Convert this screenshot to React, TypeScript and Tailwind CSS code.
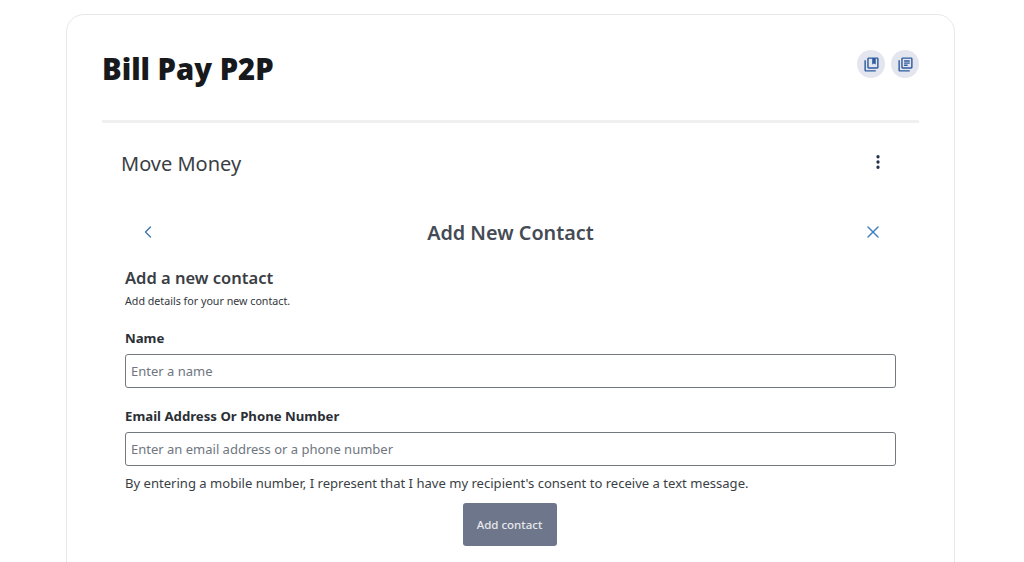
import React from 'react'
import { ChevronLeft, X, EllipsisVertical } from 'lucide-react'

const font = { sans: "font-['Noto_Sans',sans-serif]" }

// Stacked-page icons in the top right corner
const BookmarkStack = () => (
  <svg width="17" height="17" viewBox="0 0 24 24" fill="#2f5c9e">
    <path d="M4 6H2v14c0 1.1.9 2 2 2h14v-2H4V6z" />
    <path fillRule="evenodd" d="M20 2H8c-1.1 0-2 .9-2 2v12c0 1.100.9 2 2 2h12c1.100 0 2-.9 2-2V4c0-1.100-.9-2-2-2zm0 14H8V4h5v8l2.500-1.500L18 12V4h2v12z" />
  </svg>
)

const ArticleStack = () => (
  <svg width="17" height="17" viewBox="0 0 24 24" fill="#2f5c9e">
    <path d="M4 6H2v14c0 1.1.9 2 2 2h14v-2H4V6z" />
    <path fillRule="evenodd" d="M20 2H8c-1.100 0-2 .9-2 2v12c0 1.100.9 2 2 2h12c1.100 0 2-.9 2-2V4c0-1.100-.9-2-2-2zm0 14H8V4h12v12zM10 9h8v2h-8V9zm0 3h5v2h-5v-2zm0-6h8v2h-8V6z" />
  </svg>
)

const Field: React.FC<{ label: string; placeholder: string; className?: string }> = ({ label, placeholder, className = '' }) => (
  <div className={className}>
    <label className="block text-[13.2px] leading-[18px] font-bold text-[#2b2f36]">{label}</label>
    <input
      placeholder={placeholder}
      className="mt-[7px] block h-[34px] w-full rounded-[3px] border border-[#74787f] bg-white px-[5px] text-[13px] text-[#333] placeholder:text-[#6f7680] outline-none"
    />
  </div>
)

export default function App() {
  return (
    <div className={`h-[562px] overflow-hidden bg-white pt-[14px] ${font.sans}`}>
      <div className="ml-[66px] h-[600px] w-[889px] rounded-[18px] border border-[#e8e8ea] bg-white px-[35px]">
        <header className="flex h-[108px] items-start justify-between border-b-[3px] border-[#f0f0f1]">
          <h1 className="mt-[32px] text-[29.2px] leading-[44px] font-black text-[#17191c]">Bill Pay P2P</h1>
          <div className="mt-[35px] flex gap-[6px]">
            <button className="flex h-[28px] w-[28px] items-center justify-center rounded-full bg-[#e3e6ee]">
              <BookmarkStack />
            </button>
            <button className="flex h-[28px] w-[28px] items-center justify-center rounded-full bg-[#e3e6ee]">
              <ArticleStack />
            </button>
          </div>
        </header>

        <div className="flex items-start justify-between pt-[26px] pl-[19px] pr-[32px]">
          <h2 className="text-[20px] leading-[30px] text-[#3a3e44]">Move Money</h2>
          <EllipsisVertical size={18} strokeWidth={2.4} className="mt-[4px] text-[#1f2f4a]" />
        </div>

        <div className="mt-[36px] flex items-center justify-between pl-[36px] pr-[36px]">
          <ChevronLeft size={20} strokeWidth={1.6} className="text-[#3f74b0]" />
          <h3 className="mt-[3px] text-[19.800px] leading-[30px] font-semibold text-[#454b54]">Add New Contact</h3>
          <X size={20} strokeWidth={1.7} className="text-[#3f7fc0]" />
        </div>

        <div className="mx-[23px] mt-[18px] w-[771px]">
          <h4 className="text-[16.500px] leading-[24px] font-semibold text-[#3a3e44]">Add a new contact</h4>
          <p className="mt-[3px] text-[10.700px] leading-[16px] text-[#33373d]">Add details for your new contact.</p>

          <Field label="Name" placeholder="Enter a name" className="mt-[20px]" />
          <Field label="Email Address Or Phone Number" placeholder="Enter an email address or a phone number" className="mt-[19px]" />

          <p className="mt-[7px] text-[13.070px] leading-[20px] text-[#3a3f46]">
            By entering a mobile number, I represent that I have my recipient's consent to receive a text message.
          </p>

          <div className="mt-[10px] flex justify-center pr-[2px]">
            <button className="h-[43px] w-[94px] rounded-[3px] bg-[#6d768a] text-[11.500px] font-medium text-[#e6e8ec]">
              Add contact
            </button>
          </div>
        </div>
      </div>
    </div>
  )
}
